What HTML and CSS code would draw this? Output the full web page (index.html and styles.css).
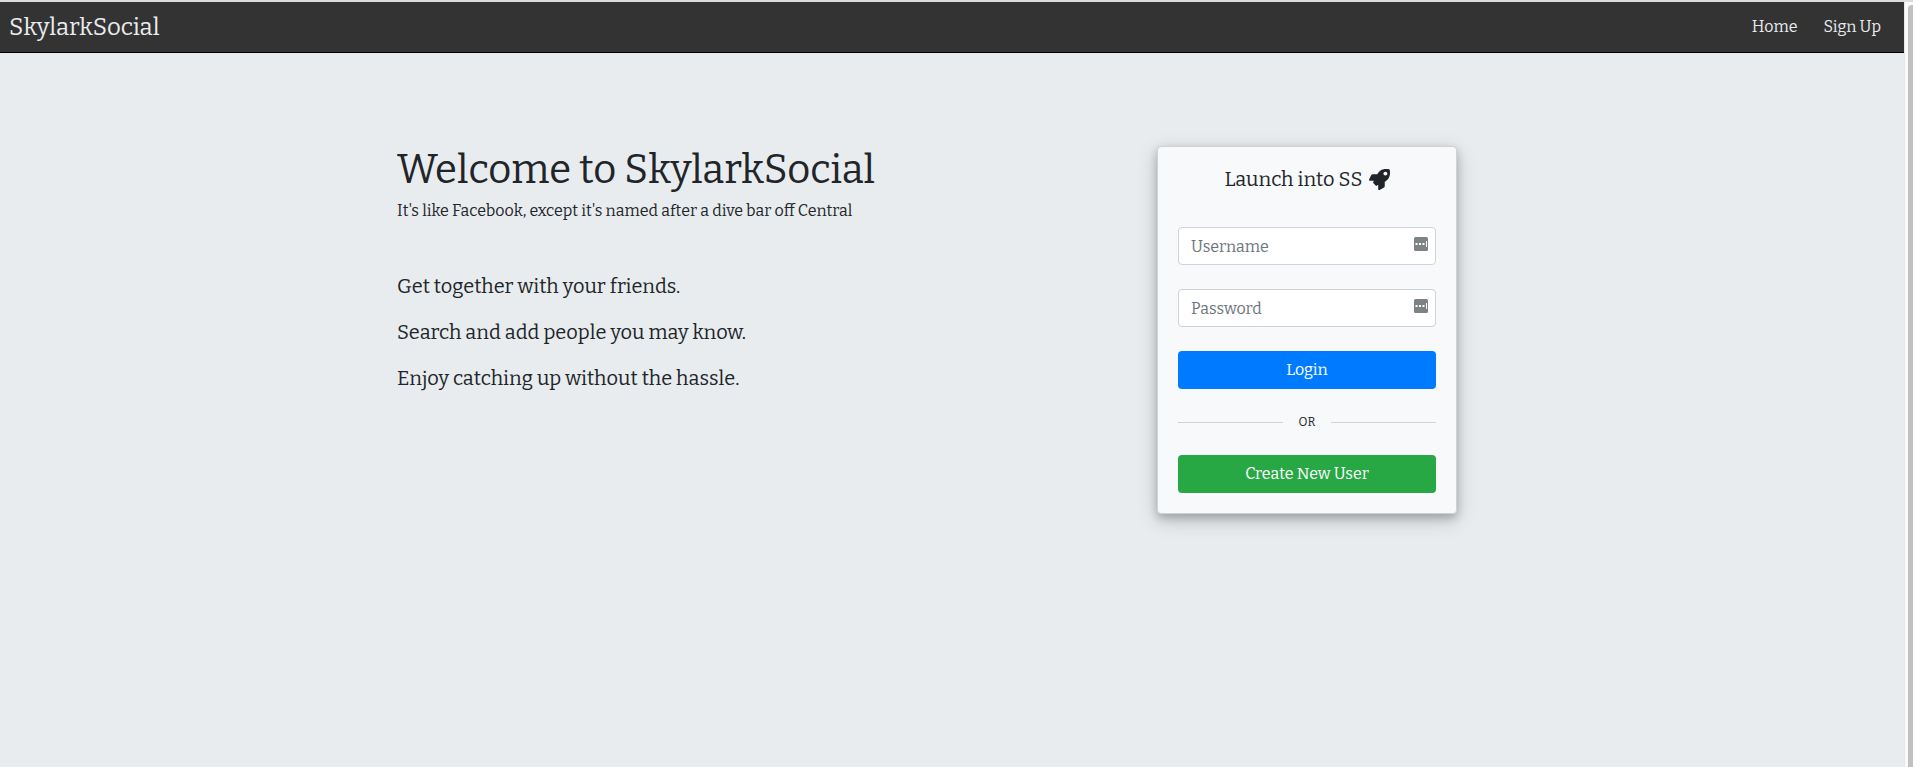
FILE: index.html
```html
<!DOCTYPE html>
<html lang="en">
<head>
<meta charset="utf-8">
<title>SkylarkSocial</title>
<link rel="stylesheet" href="styles.css">
</head>
<body>
<div class="page">
  <header class="navbar">
    <a class="brand" href="#">SkylarkSocial</a>
    <nav class="nav-links">
      <a href="#">Home</a>
      <a href="#">Sign Up</a>
    </nav>
  </header>
  <main class="container">
    <section class="intro">
      <h1>Welcome to SkylarkSocial</h1>
      <p class="tagline">It's like Facebook, except it's named after a dive bar off Central</p>
      <p class="feature">Get together with your friends.</p>
      <p class="feature">Search and add people you may know.</p>
      <p class="feature">Enjoy catching up without the hassle.</p>
    </section>
    <form class="card">
      <h2>Launch into SS
        <svg class="rocket" viewBox="0 0 512 512" aria-hidden="true"><path fill="currentColor" d="M505.1 19.1C503.800 13 499 8.200 492.900 6.900 460.700 0 435.500 0 410.400 0 307.200 0 245.300 55.200 199.100 128H94.900c-18.200 0-34.800 10.300-42.900 26.500L2.600 253.300c-8 16 3.600 34.700 21.500 34.700h95.100c-5.900 12.800-11.900 25.500-18 37.700-3.100 6.200-1.900 13.600 3 18.500l63.600 63.600c4.900 4.900 12.300 6.100 18.500 3 12.200-6.100 24.900-12 37.700-17.900V488c0 17.800 18.800 29.400 34.700 21.500l98.700-49.400c16.300-8.100 26.500-24.800 26.500-42.900V312.800c72.600-46.300 128-108.400 128-211.100.1-25.200.1-50.400-6.800-82.600zM400 160c-26.500 0-48-21.500-48-48s21.500-48 48-48 48 21.500 48 48-21.500 48-48 48z"/></svg>
      </h2>
      <div class="field">
        <input type="text" placeholder="Username" aria-label="Username">
        <svg class="key-icon" viewBox="0 0 14 14" aria-hidden="true"><rect width="14" height="14" rx="1.500" fill="#7d8285"/><path fill="#fff" d="M1.500 6h2v2h-2zM5 6h2v2H5zM8.500 6h2v2h-2zM12 4h1v6h-1z"/></svg>
      </div>
      <div class="field">
        <input type="password" placeholder="Password" aria-label="Password">
        <svg class="key-icon" viewBox="0 0 14 14" aria-hidden="true"><rect width="14" height="14" rx="1.500" fill="#7d8285"/><path fill="#fff" d="M1.500 6h2v2h-2zM5 6h2v2H5zM8.500 6h2v2h-2zM12 4h1v6h-1z"/></svg>
      </div>
      <button class="btn login" type="button">Login</button>
      <div class="divider">OR</div>
      <button class="btn create" type="button">Create New User</button>
    </form>
  </main>
</div>
<div class="scroll-track"><div class="scroll-thumb"></div></div>
</body>
</html>
```
FILE: styles.css
```css
* { box-sizing: border-box; }

body {
  margin: 0;
  min-height: 100vh;
  display: flex;
  border-top: 2px solid #dadcde;
  background: #e8ecef;
  color: #212529;
  font: 16px/24px Bitter, "DejaVu Serif Condensed", "DejaVu Serif", serif;
}

.page { flex: 1; }

.navbar {
  display: flex;
  justify-content: space-between;
  align-items: center;
  height: 51px;
  padding: 0 23px 1px 9px;
  background: #333;
  border-bottom: 1px solid #000;
}

.navbar a { color: #e8ecef; text-decoration: none; }
.brand { font-size: 24px; }
.nav-links { display: flex; gap: 26px; }

.container {
  display: grid;
  grid-template-columns: 1fr 350px;
  align-items: start;
  max-width: 1140px;
  margin: 0 auto;
  padding: 93px 15px 48px;
}

h1, h2, p { margin: 0; font-weight: 400; }
h1 { font-size: 40px; line-height: 48px; margin-bottom: 5px; }
.tagline { margin-bottom: 48px; }
.feature { font-size: 20px; line-height: 30px; margin-bottom: 16px; }

.card {
  display: flex;
  flex-direction: column;
  width: 300px;
  padding: 20px;
  background: #f8f9fb;
  border: 1px solid #cfd2d4;
  border-radius: 4px;
  box-shadow: 0 4px 8px rgba(0, 0, 0, 0.2), 0 6px 20px rgba(0, 0, 0, 0.19);
}

h2 {
  display: flex;
  justify-content: center;
  align-items: center;
  gap: 6px;
  font-size: 20px;
  line-height: 24px;
  margin-bottom: 36px;
}
.rocket { width: 21px; height: 21px; }

.field { position: relative; margin-bottom: 24px; }
.field input {
  display: block;
  width: 100%;
  height: 38px;
  padding: 6px 12px;
  border: 1px solid #ced4da;
  border-radius: 4px;
  background: #fff;
  font: inherit;
}
.field input::placeholder { color: #6c757d; opacity: 1; }
.key-icon { position: absolute; top: 10px; right: 8px; width: 14px; height: 14px; }

.btn {
  height: 38px;
  border: 0;
  border-radius: 4px;
  color: #fff;
  font: inherit;
}
.login { background: #007bff; }
.create { background: #28a745; }

.divider {
  display: flex;
  align-items: center;
  gap: 16px;
  margin: 24px 0;
  font-size: 12px;
  line-height: 18px;
}
.divider::before, .divider::after {
  content: "";
  flex: 1;
  height: 1px;
  background: #ced4da;
}

.scroll-track {
  display: flex;
  width: 9px;
  padding: 3px 0 0 3px;
  border-left: 1px solid #e7e7e7;
  background: #fafafa;
}
.scroll-thumb { flex: 1; background: #c1c1c1; border-radius: 4px 0 0 0; }
```
